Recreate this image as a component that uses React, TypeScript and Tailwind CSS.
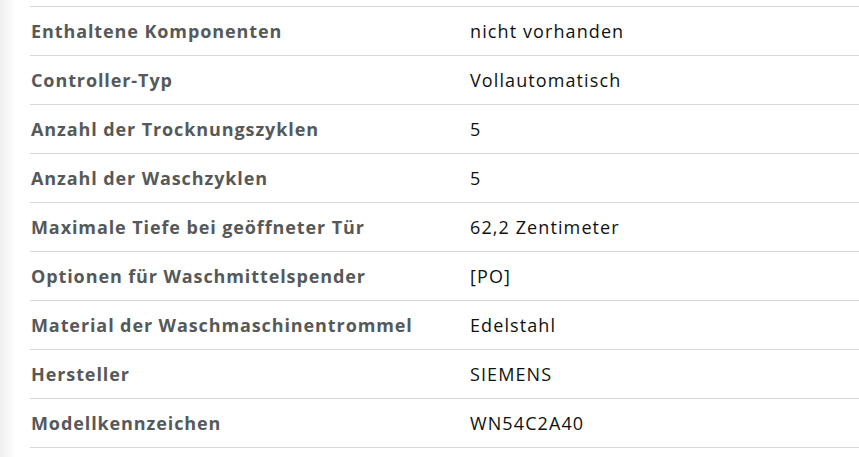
const rows: [string, string][] = [
  ["Enthaltene Komponenten", "nicht vorhanden"],
  ["Controller-Typ", "Vollautomatisch"],
  ["Anzahl der Trocknungszyklen", "5"],
  ["Anzahl der Waschzyklen", "5"],
  ["Maximale Tiefe bei geöffneter Tür", "62,2 Zentimeter"],
  ["Optionen für Waschmittelspender", "[PO]"],
  ["Material der Waschmaschinentrommel", "Edelstahl"],
  ["Hersteller", "SIEMENS"],
  ["Modellkennzeichen", "WN54C2A40"],
];

export default function App() {
  return (
    <main
      className="h-[457px] w-[859px] overflow-hidden bg-[linear-gradient(to_right,#efefef,#ffffff_16px)] pl-[30px] pt-[6px]"
      style={{ fontFamily: '"Open Sans", "Noto Sans", Arial, sans-serif' }}
    >
      <table className="w-full border-collapse">
        <tbody>
          {rows.map(([label, value]) => (
            <tr key={label} className="h-[49px] border-y border-[#d5d9d9]">
              <th className="w-[440px] pl-px text-left align-middle text-[18px] font-bold tracking-[0.9px] text-[#565959]">
                {label}
              </th>
              <td className="align-middle text-[18px] tracking-[1.1px] text-[#0f1111]">{value}</td>
            </tr>
          ))}
        </tbody>
      </table>
    </main>
  );
}
